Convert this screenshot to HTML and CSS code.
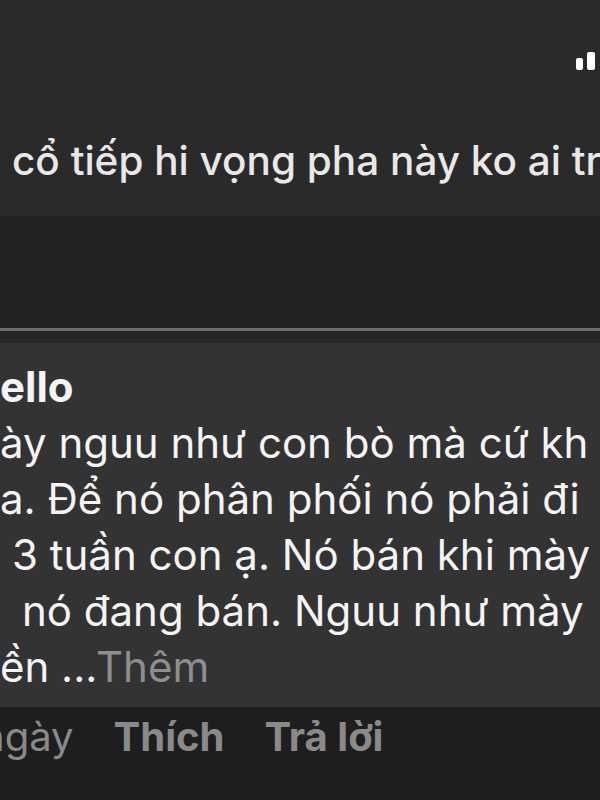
FILE: index.html
```html
<!DOCTYPE html>
<html lang="vi">
<head>
  <meta charset="UTF-8" />
  <meta name="viewport" content="width=device-width, initial-scale=1.0" />
  <title>Bình luận</title>
  <link rel="stylesheet" href="styles.css">
</head>
<body>
  <div class="post">
    <div class="signal">
      <span class="bar bar-low"></span>
      <span class="bar bar-high"></span>
    </div>
    <p class="post-text">cổ tiếp hi vọng pha này ko ai tr</p>
  </div>
  <div class="blank"></div>
  <div class="divider"></div>
  <div class="under"></div>

  <div class="bubble">
    <div class="name">ello</div>
    <div class="line">ày nguu như con bò mà cứ kh</div>
    <div class="line">a. Để nó phân phối nó phải đi</div>
    <div class="line indent-a">3 tuần con ạ. Nó bán khi mày</div>
    <div class="line indent-b">nó đang bán. Nguu như mày</div>
    <div class="line">ền ...<span class="more">Thêm</span></div>
  </div>

  <div class="actions">
    <span class="time">ngày</span>
    <span class="act">Thích</span>
    <span class="act">Trả lời</span>
  </div>
</body>
</html>
```

FILE: styles.css
```css
* {
  margin: 0;
  padding: 0;
  box-sizing: border-box;
}
body {
  font-family: Inter, "Noto Sans", sans-serif;
  background-color: #1e1e1e;
  color: #f4f4f4;
  width: 600px;
  height: 800px;
  overflow: hidden;
}
.post {
  height: 216px;
  background-color: #2a2a2a;
  padding-top: 52px;
}
.signal {
  display: flex;
  justify-content: flex-end;
  align-items: flex-end;
  gap: 4px;
  height: 18px;
  padding-right: 5px;
}
.bar {
  display: block;
  width: 7px;
  background: #fff;
  border-radius: 2px;
}
.bar-low {
  height: 12px;
}
.bar-high {
  width: 8px;
  height: 18px;
}
.post-text {
  margin-top: 66px;
  padding-left: 12px;
  font-size: 40.5px;
  font-weight: 500;
  line-height: 50px;
  color: #e8e8e8;
  white-space: nowrap;
  overflow: hidden;
}
.blank {
  height: 112px;
  background-color: #222;
}
.divider {
  height: 3px;
  background-color: #6c6c6c;
}
.under {
  height: 12px;
  background-color: #262626;
}
.bubble {
  background-color: #333;
  padding: 16px 0 12px;
  font-size: 42px;
  line-height: 56px;
  white-space: nowrap;
  overflow: hidden;
}
.name {
  font-weight: 700;
}
.indent-a {
  padding-left: 12px;
}
.indent-b {
  padding-left: 22px;
}
.more {
  color: #8e8e8e;
}
.actions {
  display: flex;
  gap: 40px;
  padding-top: 2px;
  margin-left: -19px;
  font-size: 40px;
  line-height: 56px;
  color: #8a8a8a;
  white-space: nowrap;
}
.act {
  font-weight: 700;
}
```
